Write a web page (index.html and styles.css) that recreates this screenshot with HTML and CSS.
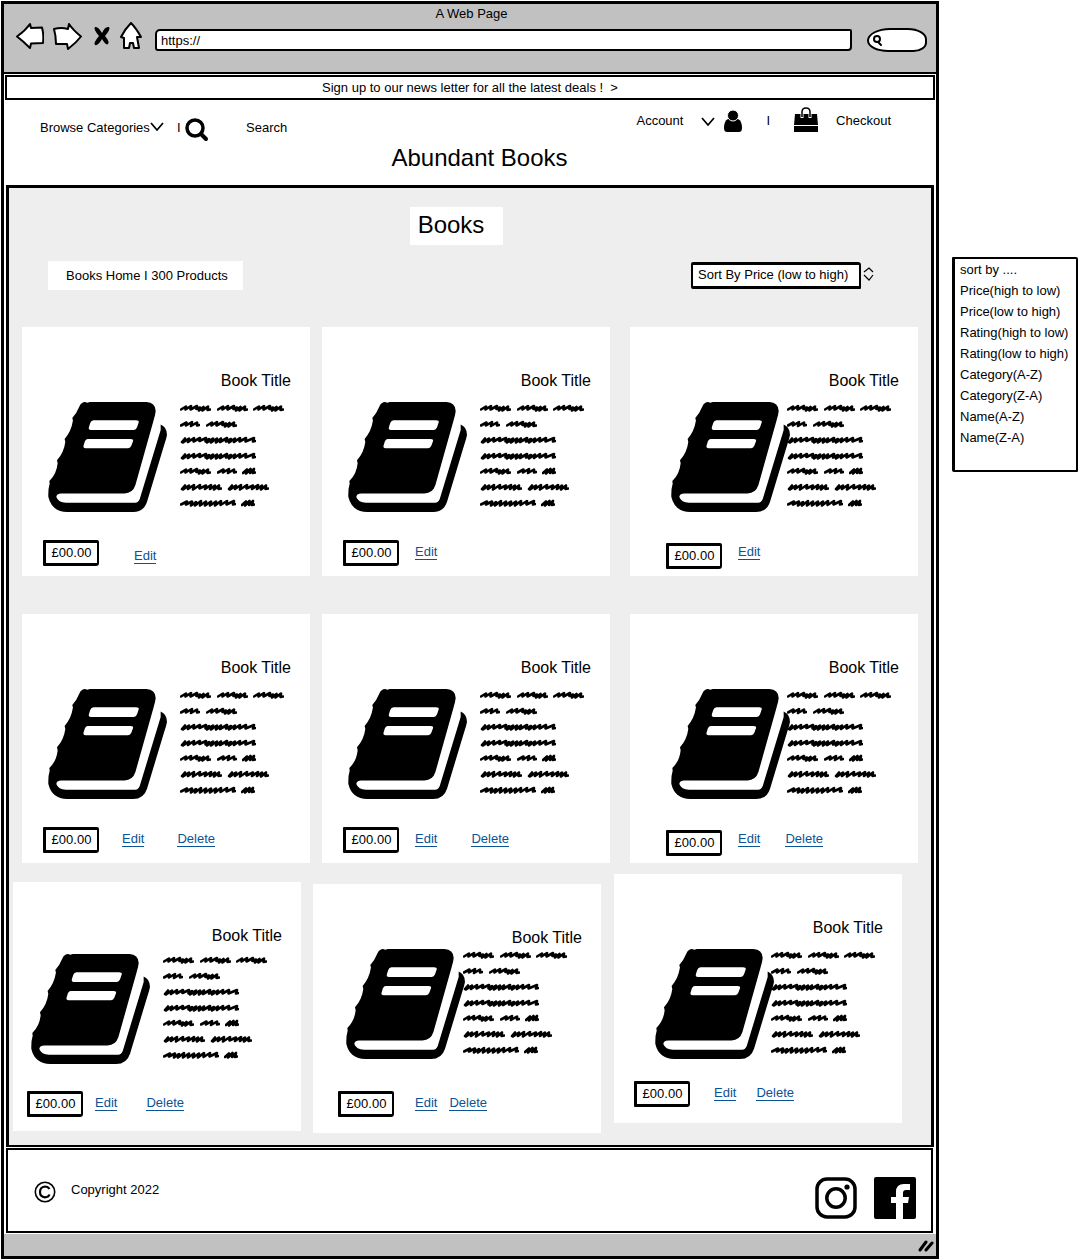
FILE: index.html
```html
<!DOCTYPE html>
<html lang="en">
<head>
<meta charset="utf-8">
<title>Abundant Books</title>
<link rel="stylesheet" href="styles.css">
</head>
<body>
<svg class="sprite" aria-hidden="true">
  <symbol id="book" viewBox="112 246 358 331">
    <path d="M451 314 Q470 322 470 345 Q468 356 462 374 L410 546 Q400 577 368 577 H170 Q124 577 113 532 Q112 508 117 492 L116 484 Q138 462 141 430 L139 421 Q160 398 164 366 L162 357 Q182 335 187 302 L185 294 Q199 278 206 260 Q212 246 224 246 L230 248 L238 246 H408 Q435 247 436 273 Q435 284 430 300 L375 496 Q367 521 342 521 H152 Q137 522 137 532 Q143 549 166 549 H374 Q384 549 388 538 L451 330 Z"/>
    <path fill="#fff" d="M249 301 H377 Q386 301 385 307 L380 322 Q377 330 370 330 H241 Q233 330 235 322 L239 309 Q242 301 249 301 Z M232 357 H361 Q369 357 368 363 L363 377 Q360 385 353 385 H225 Q217 385 219 377 L223 364 Q226 357 232 357 Z"/>
  </symbol>
  <symbol id="w14" viewBox="0 0 14 8"><path d="M1 6L5 2.500L4 6.500L8.500 2L8 6L12 2L11 6L13 5.500"/></symbol>
  <symbol id="w20" viewBox="0 0 20 8"><path d="M1 5.500L6.500 2.500L6 5.500L12 2L11 6L17 2.500L17 5.500L19 5"/></symbol>
  <symbol id="w31" viewBox="0 0 31 8"><path d="M1 5.500L6 2.500L5.500 5.500L11 2L10.500 5.500L17 2L16.500 5L20 3.500L19 6.500L23.500 3L22.500 6.500L28 2.500L27.500 6L30 5.500"/></symbol>
  <symbol id="w42" viewBox="0 0 42 8"><path d="M2 6L5 2.500L3 6.500L9 2.500L8 6L14 2L13 6.500L20 2L19.500 5.500L26 2.500L25 6L31 2L30 6L35 2.500L34 6.500L39 2.500L38.500 6L41 5.500"/></symbol>
  <symbol id="w56" viewBox="0 0 56 8"><path d="M1 5.500L7 2.500L6 5.500L12 2.500L11 6.500L16 3L15 6.500L21 2L20 6.500L26 2.500L25 6.500L31 2.500L30 6.500L36 2.500L35 6.500L41 2L40.500 6L47 2L46.500 5.500L54 2L53 5.500L55 5"/></symbol>
  <symbol id="w76" viewBox="0 0 76 8"><path d="M2 6L5 2.500L3 6.500L9 2.500L8 6L14 2L13.500 5.500L20 2L19.500 5L26 2L25.500 5.500L29 3L27 6.500L33 2.500L31 6.500L37 2.500L36 6.500L41 2.500L40 6L47 2L46 5.500L51 3L49 6.500L55 2.500L54 6L60 2L59.500 5.500L66 2L65.500 5.500L74 2L73 5.500L75 5"/></symbol>
  <symbol id="blurb" viewBox="0 0 106 111">
    <g fill="none" stroke="#000" stroke-width="2.600" stroke-linecap="round" stroke-linejoin="round">
      <use href="#w31" x="0" y="2" width="31" height="8"/><use href="#w31" x="37" y="2" width="31" height="8"/><use href="#w31" x="73" y="2" width="31" height="8"/>
      <use href="#w20" x="0" y="18" width="20" height="8"/><use href="#w31" x="26" y="18" width="31" height="8"/>
      <use href="#w76" x="0" y="34" width="76" height="8"/>
      <use href="#w76" x="0" y="50" width="76" height="8"/>
      <use href="#w31" x="0" y="65" width="31" height="8"/><use href="#w20" x="37" y="65" width="20" height="8"/><use href="#w14" x="62" y="65" width="14" height="8"/>
      <use href="#w42" x="0" y="81" width="42" height="8"/><use href="#w42" x="47" y="81" width="42" height="8"/>
      <use href="#w56" x="0" y="97" width="56" height="8"/><use href="#w14" x="61" y="97" width="14" height="8"/>
    </g>
  </symbol>
  <symbol id="chevron" viewBox="0 0 14 9"><path d="M1 1L7 8L13 1" fill="none" stroke="#000" stroke-width="1.700"/></symbol>
</svg>

<div class="page">
  <div class="window">
    <div class="chrome">
      <div class="chrome-title">A Web Page</div>
      <div class="toolbar">
        <button class="icon-btn" aria-label="Back"><svg width="28" height="26" viewBox="0 0 28 26"><path d="M1 13.500Q9 8 14 1L15 5L26 4.500Q28 12 27 20L15 20.500L14 25Q7 18 1 13.500Z" fill="#fff" stroke="#000" stroke-width="2" stroke-linejoin="round"/></svg></button>
        <button class="icon-btn forward" aria-label="Forward"><svg width="29" height="27" viewBox="0 0 29 27"><path d="M1 6Q8 4 15 6L16 1Q20 7 28 13.500Q23 20 15 26L14 21L3 21Q3 13 1 6Z" fill="#fff" stroke="#000" stroke-width="2" stroke-linejoin="round"/></svg></button>
        <button class="icon-btn stop" aria-label="Stop"><svg width="18" height="20" viewBox="0 0 18 20"><path d="M2 1Q5 0 9 7Q12 0 16 1Q18 3 12 10Q17 16 15 18Q13 20 9 13Q5 20 2 19Q0 17 6 10Q0 3 2 1Z"/></svg></button>
        <button class="icon-btn home" aria-label="Home"><svg width="24" height="28" viewBox="0 0 24 28"><path d="M12 1Q17 6 22 15L18 15L20 26H15L14 21H11L10 26L5 26L5 16L2 15Q6 7 12 1Z" fill="#fff" stroke="#000" stroke-width="2" stroke-linejoin="round"/></svg></button>
        <input class="address" type="text" value="https://" aria-label="Address">
        <label class="pill"><svg width="10" height="11" viewBox="0 0 10 11"><circle cx="5" cy="4" r="3" fill="none" stroke="#000" stroke-width="2"/><path d="M6 7L9 10" stroke="#000" stroke-width="2" stroke-linecap="round"/></svg><input type="search" aria-label="Search the web"></label>
      </div>
    </div>

    <a class="newsletter" href="#">Sign up to our news letter for all the latest deals !&nbsp; &gt;</a>

    <header class="header">
      <nav class="nav nav-left" aria-label="Browse">
        <a class="browse" href="#">Browse Categories</a><svg class="browse-arrow" width="14" height="9"><use href="#chevron"/></svg>
        <span class="bar">I</span>
        <svg class="lens" width="24" height="24" viewBox="0 0 24 24"><circle cx="10" cy="10" r="8" fill="none" stroke="#000" stroke-width="3.500"/><path d="M16 16L21 21" stroke="#000" stroke-width="4" stroke-linecap="round"/></svg>
        <button class="search-btn">Search</button>
      </nav>
      <nav class="nav nav-right" aria-label="Account">
        <a href="#">Account</a>
        <svg class="account-arrow" width="14" height="9"><use href="#chevron"/></svg>
        <svg class="person" width="18" height="22" viewBox="0 0 18 22"><path d="M4 9H14Q18 11 18 18Q18 22 15 22H3Q0 22 0 18Q0 11 4 9Z"/><circle cx="9" cy="5.500" r="5.500" stroke="#fff"/></svg>
        <span class="bar">I</span>
        <svg class="bag" width="24" height="25" viewBox="0 0 24 25"><path d="M1 7H23L24 18H0ZM0 19H24V25H0Z"/><path d="M8 11V5Q8 1 12 1Q16 1 16 5V11" fill="none" stroke="#fff" stroke-width="3"/><path d="M8 10V5Q8 1 12 1Q16 1 16 5V10" fill="none" stroke="#000" stroke-width="1.500"/></svg>
        <a href="#">Checkout</a>
      </nav>
      <h1 class="brand">Abundant Books</h1>
    </header>

    <main class="shop">
      <div class="heading"><h2>Books</h2></div>
      <div class="controls">
        <p class="crumb">Books Home I 300 Products</p>
        <div class="sort">
          <select aria-label="Sort products"><option>Sort By Price (low to high)</option><option>Price(high to low)</option></select>
          <svg width="11" height="14" viewBox="0 0 11 14"><path d="M1 5L6 1L10 5M1 8L6 13L10 8" fill="none" stroke="#000" stroke-width="1.200"/></svg>
        </div>
      </div>

      <div class="row">
        <article class="card links-low edit-far">
          <h3>Book Title</h3>
          <div class="card-body"><svg class="book"><use href="#book"/></svg><svg class="blurb"><use href="#blurb"/></svg></div>
          <div class="card-foot"><span class="price">£00.00</span><a class="edit" href="#">Edit</a></div>
        </article>
        <article class="card">
          <h3>Book Title</h3>
          <div class="card-body"><svg class="book"><use href="#book"/></svg><svg class="blurb"><use href="#blurb"/></svg></div>
          <div class="card-foot"><span class="price">£00.00</span><a class="edit" href="#">Edit</a></div>
        </article>
        <article class="card tight">
          <h3>Book Title</h3>
          <div class="card-body"><svg class="book"><use href="#book"/></svg><svg class="blurb"><use href="#blurb"/></svg></div>
          <div class="card-foot"><span class="price">£00.00</span><a class="edit" href="#">Edit</a></div>
        </article>
      </div>

      <div class="row row-second">
        <article class="card edit-mid">
          <h3>Book Title</h3>
          <div class="card-body"><svg class="book"><use href="#book"/></svg><svg class="blurb"><use href="#blurb"/></svg></div>
          <div class="card-foot"><span class="price">£00.00</span><a class="edit" href="#">Edit</a><a class="delete" href="#">Delete</a></div>
        </article>
        <article class="card">
          <h3>Book Title</h3>
          <div class="card-body"><svg class="book"><use href="#book"/></svg><svg class="blurb"><use href="#blurb"/></svg></div>
          <div class="card-foot"><span class="price">£00.00</span><a class="edit" href="#">Edit</a><a class="delete" href="#">Delete</a></div>
        </article>
        <article class="card tight">
          <h3>Book Title</h3>
          <div class="card-body"><svg class="book"><use href="#book"/></svg><svg class="blurb"><use href="#blurb"/></svg></div>
          <div class="card-foot"><span class="price">£00.00</span><a class="edit" href="#">Edit</a><a class="delete" href="#">Delete</a></div>
        </article>
      </div>

      <div class="row row-last">
        <article class="card last-a">
          <h3>Book Title</h3>
          <div class="card-body"><svg class="book"><use href="#book"/></svg><svg class="blurb"><use href="#blurb"/></svg></div>
          <div class="card-foot"><span class="price">£00.00</span><a class="edit" href="#">Edit</a><a class="delete" href="#">Delete</a></div>
        </article>
        <article class="card last-b">
          <h3>Book Title</h3>
          <div class="card-body"><svg class="book"><use href="#book"/></svg><svg class="blurb"><use href="#blurb"/></svg></div>
          <div class="card-foot"><span class="price">£00.00</span><a class="edit" href="#">Edit</a><a class="delete" href="#">Delete</a></div>
        </article>
        <article class="card last-c">
          <h3>Book Title</h3>
          <div class="card-body"><svg class="book"><use href="#book"/></svg><svg class="blurb"><use href="#blurb"/></svg></div>
          <div class="card-foot"><span class="price">£00.00</span><a class="edit" href="#">Edit</a><a class="delete" href="#">Delete</a></div>
        </article>
      </div>
    </main>

    <footer class="footer">
      <svg class="copyright" width="22" height="22" viewBox="0 0 22 22" fill="none" stroke="#000"><circle cx="11" cy="11" r="9.700" stroke-width="1.600"/><path d="M15.500 8Q14 5.500 11 5.500Q6 6 6 11Q6 16 11 16.300Q14.500 16.300 15.500 13.500" stroke-width="2.200"/></svg>
      <p>Copyright 2022</p>
      <div class="social">
        <a href="#" aria-label="Instagram"><svg width="42" height="42" viewBox="0 0 42 42"><rect x="2" y="2" width="38" height="38" rx="10" fill="none" stroke="#000" stroke-width="3.500"/><circle cx="21" cy="21" r="9.200" fill="none" stroke="#000" stroke-width="3.500"/><circle cx="32" cy="10" r="2.600"/></svg></a>
        <a href="#" aria-label="Facebook"><svg width="42" height="42" viewBox="0 0 42 42"><path d="M2 0H40Q42 0 42 2V40Q42 42 40 42H29V26H34L35 20H29V16Q29 13 32 13H36V7H30Q22 7 22 15V20H17V26H22V42H2Q0 42 0 40V2Q0 0 2 0Z"/></svg></a>
      </div>
    </footer>

    <div class="status"><svg width="16" height="12" viewBox="0 0 16 12"><path d="M2 10L8 2M8 10L14 3" stroke="#000" stroke-width="3" stroke-linecap="round"/></svg></div>
  </div>

  <aside class="options" aria-label="Sort options">
    <ul>
      <li>sort by ....</li>
      <li><button>Price(high to low)</button></li>
      <li><button>Price(low to high)</button></li>
      <li><button>Rating(high to low)</button></li>
      <li><button>Rating(low to high)</button></li>
      <li><button>Category(A-Z)</button></li>
      <li><button>Category(Z-A)</button></li>
      <li><button>Name(A-Z)</button></li>
      <li><button>Name(Z-A)</button></li>
    </ul>
  </aside>
</div>
</body>
</html>
```
FILE: styles.css
```css
* { box-sizing: border-box; margin: 0; padding: 0; }

body {
  background: #fff;
  color: #000;
  font: 13px/18px "Liberation Sans", Arial, sans-serif;
}

.sprite { display: none; }
svg { display: block; flex: none; }
a { color: inherit; text-decoration: none; white-space: nowrap; }
ul { list-style: none; }
button, input, select { font: inherit; color: inherit; background: none; border: 0; outline: 0; }
button { white-space: nowrap; }

.page { display: flex; align-items: flex-start; padding: 1px 0 1px 1px; }
.window { flex: 1; min-width: 0; border: 3px solid #000; }

/* Browser frame */
.chrome { background: #c1c1c1; border-bottom: 2px solid #000; padding: 1px 9px 15px 12px; }
.chrome-title { text-align: center; line-height: 18px; }
.toolbar { display: flex; align-items: center; height: 34px; }
.icon-btn { margin-bottom: 8px; }
.forward { margin-left: 9px; }
.stop { margin-left: 11px; }
.home { margin-left: 8px; }
.address {
  flex: 1;
  min-width: 0;
  height: 22px;
  margin: 0 15px 0 12px;
  padding-left: 4px;
  background: #fff;
  border: 2px solid #000;
  border-radius: 5px 2px 4px 3px;
}
.pill {
  display: flex;
  align-items: center;
  width: 60px;
  height: 24px;
  padding-left: 3px;
  background: #fff;
  border: 2px solid #000;
  border-radius: 24px 20px 14px 22px / 13px 12px 10px 12px;
}
.pill input { width: 40px; min-width: 0; }

.newsletter {
  display: block;
  margin: 1px 1px 0;
  border: 2px solid #000;
  line-height: 21px;
  text-align: center;
}

/* Shop header */
.header {
  display: grid;
  grid-template-columns: auto auto;
  grid-template-rows: 36px auto;
  justify-content: space-between;
  padding: 8px 45px 13px 36px;
}
.nav { display: flex; align-items: center; height: 26px; }
.nav-left { margin-top: 7px; }
.browse { width: 110px; }
.browse-arrow { margin-bottom: 4px; }
.nav-left .bar { width: 8px; margin-left: 13px; }
.lens { margin-top: 4px; }
.search-btn { margin-left: 37px; }
.account-arrow { margin-left: 18px; }
.person { margin-left: 9px; }
.nav-right .bar { margin: 0 24px; }
.bag { margin: 0 18px 4px 0; }
.brand {
  grid-column: 1 / -1;
  padding-left: 28px;
  font-size: 24px;
  font-weight: 400;
  line-height: 28px;
  text-align: center;
}

/* Product listing */
.shop {
  margin: 0 2px;
  padding: 19px 0 12px;
  background: #eee;
  border: solid #000;
  border-width: 3px 3px 2px;
}
.heading { display: flex; justify-content: center; padding-right: 27px; }
.heading h2 {
  padding: 0 19px 2px 8px;
  background: #fff;
  font-size: 24px;
  font-weight: 400;
  line-height: 36px;
}
.controls {
  display: flex;
  justify-content: space-between;
  align-items: center;
  margin: 16px 57px 37px 39px;
}
.crumb { width: 195px; padding-left: 18px; background: #fff; line-height: 29px; }
.sort { display: flex; align-items: center; gap: 2px; }
.sort svg { margin-bottom: 4px; }
.sort select {
  width: 170px;
  height: 27px;
  padding: 0 0 2px 5px;
  background: #fff;
  border: solid #000;
  border-width: 3px 2px;
  border-radius: 2px 3px 1px 2px;
  appearance: none;
}

.row { display: flex; align-items: flex-start; gap: 12px; padding: 0 13px; }
.row .card:last-child { margin-left: 8px; }
.row-second { margin-top: 38px; }
.row-last { margin-top: 11px; padding: 0 29px 0 4px; }
.row-last .card:last-child { margin-left: 1px; }

.card {
  --book-x: 26px;
  --blurb-col: 132px;
  --body-gap: 11px;
  --foot-gap: 27px;
  --price-x: 21px;
  --edit-gap: 16px;
  --delete-gap: 34px;
  flex: 1;
  min-width: 0;
  min-height: 249px;
  padding-top: 44px;
  background: #fff;
}
.card h3 { padding-right: 19px; font-size: 16px; font-weight: 400; line-height: 20px; text-align: right; }
.card-body {
  display: grid;
  grid-template-columns: var(--blurb-col) 106px;
  margin: var(--body-gap) 0 var(--foot-gap) var(--book-x);
}
.book { width: 119px; height: 110px; }
.blurb { width: 106px; height: 111px; }
.card-foot { display: flex; align-items: center; padding-left: var(--price-x); }
.price {
  width: 56px;
  padding-bottom: 1px;
  border: solid #000;
  border-width: 3px 2px 3px 3px;
  border-radius: 1px 2px 3px 1px;
  line-height: 19px;
  text-align: center;
}
.card-foot a { margin-bottom: 2px; color: #0b5394; border-bottom: 1px solid #0b5394; line-height: 15px; }
.edit { margin-left: var(--edit-gap); }
.delete { margin-left: var(--delete-gap); }

.edit-far { --edit-gap: 35px; }
.edit-mid { --edit-gap: 23px; --delete-gap: 33px; }
.links-low .card-foot { align-items: flex-end; }
.tight {
  --book-x: 41px;
  --blurb-col: 116px;
  --foot-gap: 30px;
  --price-x: 36px;
  --delete-gap: 25px;
}
.tight .card-foot { align-items: flex-start; }
.tight .card-foot a { margin-top: 1px; }
.last-a {
  --book-x: 18px;
  --body-gap: 8px;
  --foot-gap: 26px;
  --price-x: 14px;
  --edit-gap: 12px;
  --delete-gap: 29px;
  margin-top: 8px;
}
.last-b {
  --book-x: 33px;
  --blurb-col: 117px;
  --body-gap: 1px;
  --foot-gap: 31px;
  --price-x: 25px;
  --edit-gap: 21px;
  --delete-gap: 12px;
  margin-top: 10px;
}
.last-c {
  --book-x: 41px;
  --blurb-col: 116px;
  --foot-gap: 21px;
  --price-x: 20px;
  --edit-gap: 24px;
  --delete-gap: 20px;
}

/* Footer */
.footer {
  display: flex;
  align-items: flex-start;
  margin: 1px 3px 1px 2px;
  padding: 27px 15px 12px 26px;
  border: 2px solid #000;
}
.copyright { margin-top: 4px; }
.footer p { margin: 4px 0 0 15px; }
.social { display: flex; gap: 17px; margin-left: auto; }
.status { display: flex; justify-content: flex-end; padding: 6px 2px 4px; background: #c1c1c1; }

/* Sort options panel */
.options { width: 126px; margin: 256px 0 0 13px; padding: 0 0 22px 5px; border: solid #000; border-width: 2px 2px 2px 3px; border-radius: 1px 2px; }
.options li { line-height: 21px; white-space: nowrap; }
.options button { display: block; line-height: 21px; }
```
